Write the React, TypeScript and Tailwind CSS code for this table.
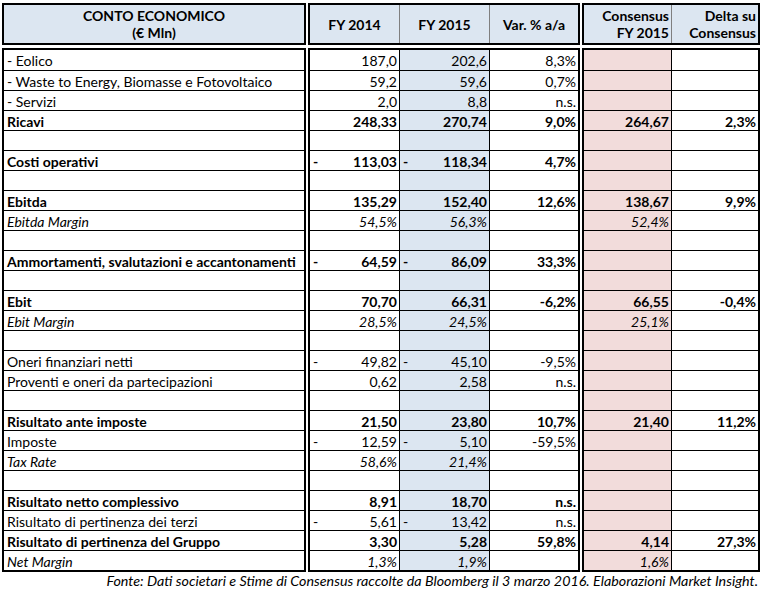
import React from 'react'

type Kind = 'normal' | 'bold' | 'italic' | 'blank'

type Row = {
  label?: string
  kind: Kind
  fy14?: string
  fy15?: string
  neg?: boolean
  varPct?: string
  cons?: string
  delta?: string
}

const rows: Row[] = [
  { label: '- Eolico', kind: 'normal', fy14: '187,0', fy15: '202,6', varPct: '8,3%' },
  { label: '- Waste to Energy, Biomasse e Fotovoltaico', kind: 'normal', fy14: '59,2', fy15: '59,6', varPct: '0,7%' },
  { label: '- Servizi', kind: 'normal', fy14: '2,0', fy15: '8,8', varPct: 'n.s.' },
  { label: 'Ricavi', kind: 'bold', fy14: '248,33', fy15: '270,74', varPct: '9,0%', cons: '264,67', delta: '2,3%' },
  { kind: 'blank' },
  { label: 'Costi operativi', kind: 'bold', fy14: '113,03', fy15: '118,34', neg: true, varPct: '4,7%' },
  { kind: 'blank' },
  { label: 'Ebitda', kind: 'bold', fy14: '135,29', fy15: '152,40', varPct: '12,6%', cons: '138,67', delta: '9,9%' },
  { label: 'Ebitda Margin', kind: 'italic', fy14: '54,5%', fy15: '56,3%', cons: '52,4%' },
  { kind: 'blank' },
  { label: 'Ammortamenti, svalutazioni e accantonamenti', kind: 'bold', fy14: '64,59', fy15: '86,09', neg: true, varPct: '33,3%' },
  { kind: 'blank' },
  { label: 'Ebit', kind: 'bold', fy14: '70,70', fy15: '66,31', varPct: '-6,2%', cons: '66,55', delta: '-0,4%' },
  { label: 'Ebit Margin', kind: 'italic', fy14: '28,5%', fy15: '24,5%', cons: '25,1%' },
  { kind: 'blank' },
  { label: 'Oneri finanziari netti', kind: 'normal', fy14: '49,82', fy15: '45,10', neg: true, varPct: '-9,5%' },
  { label: 'Proventi e oneri da partecipazioni', kind: 'normal', fy14: '0,62', fy15: '2,58', varPct: 'n.s.' },
  { kind: 'blank' },
  { label: 'Risultato ante imposte', kind: 'bold', fy14: '21,50', fy15: '23,80', varPct: '10,7%', cons: '21,40', delta: '11,2%' },
  { label: 'Imposte', kind: 'normal', fy14: '12,59', fy15: '5,10', neg: true, varPct: '-59,5%' },
  { label: 'Tax Rate', kind: 'italic', fy14: '58,6%', fy15: '21,4%' },
  { kind: 'blank' },
  { label: 'Risultato netto complessivo', kind: 'bold', fy14: '8,91', fy15: '18,70', varPct: 'n.s.' },
  { label: 'Risultato di pertinenza dei terzi', kind: 'normal', fy14: '5,61', fy15: '13,42', neg: true, varPct: 'n.s.' },
  { label: 'Risultato di pertinenza del Gruppo', kind: 'bold', fy14: '3,30', fy15: '5,28', varPct: '59,8%', cons: '4,14', delta: '27,3%' },
  { label: 'Net Margin', kind: 'italic', fy14: '1,3%', fy15: '1,9%', cons: '1,6%' },
]

const textStyle = (kind: Kind) =>
  kind === 'bold' ? 'font-bold' : kind === 'italic' ? 'italic' : ''

const rowLine = (i: number) => (i === 0 ? 'h-[20px]' : 'h-[20px] border-t border-black')

const NumCell = ({ value, neg, className = '' }: { value?: string; neg?: boolean; className?: string }) => (
  <div className={`flex items-center justify-between pl-[3px] pr-[2px] pt-[1px] ${className}`}>
    <span>{neg ? '-' : ''}</span>
    <span>{value}</span>
  </div>
)

const App = () => {
  return (
    <div
      className="w-[763px] h-[589px] bg-white text-black text-[14px] leading-[17px] pl-[2px] pt-[3px]"
      style={{ fontFamily: 'Lato, "Open Sans", sans-serif' }}
    >
      <div className="flex gap-[2px]">
        {/* label column */}
        <div className="flex w-[304px] flex-col gap-[3px]">
          <div className="flex h-[42px] flex-col items-center justify-center border-2 border-black bg-[#dce6f1] font-bold">
            <span>CONTO ECONOMICO</span>
            <span>(€ Mln)</span>
          </div>
          <div className="border-2 border-black">
            {rows.map((r, i) => (
              <div key={i} className={`${rowLine(i)} flex items-center pl-[3px] pt-[1px] ${textStyle(r.kind)}`}>
                {r.label}
              </div>
            ))}
          </div>
        </div>

        {/* company figures */}
        <div className="flex w-[272px] flex-col gap-[3px]">
          <div className="grid h-[42px] grid-cols-[89px_90px_89px] border-2 border-black bg-[#dce6f1] font-bold">
            <div className="flex items-center justify-center">FY 2014</div>
            <div className="flex items-center justify-center border-l border-[#7f7f7f]">FY 2015</div>
            <div className="flex items-center justify-center border-l border-[#7f7f7f]">Var. % a/a</div>
          </div>
          <div className="border-2 border-black">
            {rows.map((r, i) => (
              <div key={i} className={`${rowLine(i)} grid grid-cols-[89px_90px_89px] ${textStyle(r.kind)}`}>
                <NumCell value={r.fy14} neg={r.neg} />
                <NumCell value={r.fy15} neg={r.neg} className="border-l border-black bg-[#dce6f1]" />
                <NumCell value={r.varPct} className="border-l border-black" />
              </div>
            ))}
          </div>
        </div>

        {/* consensus */}
        <div className="flex w-[178px] flex-col gap-[3px]">
          <div className="grid h-[42px] grid-cols-[87px_87px] border-2 border-black bg-[#dce6f1] font-bold">
            <div className="flex flex-col items-end justify-center pr-[2px]">
              <span>Consensus</span>
              <span>FY 2015</span>
            </div>
            <div className="flex flex-col items-end justify-center border-l border-[#7f7f7f] pr-[2px]">
              <span>Delta su</span>
              <span>Consensus</span>
            </div>
          </div>
          <div className="border-2 border-black">
            {rows.map((r, i) => (
              <div key={i} className={`${rowLine(i)} grid grid-cols-[87px_87px] ${textStyle(r.kind)}`}>
                <NumCell value={r.cons} className="bg-[#f2dcdb]" />
                <NumCell value={r.delta} className="border-l border-black" />
              </div>
            ))}
          </div>
        </div>
      </div>

      <p className="pr-[5px] text-right text-[14.3px] italic">
        Fonte: Dati societari e Stime di Consensus raccolte da Bloomberg il 3 marzo 2016. Elaborazioni Market Insight.
      </p>
    </div>
  )
}

export default App
